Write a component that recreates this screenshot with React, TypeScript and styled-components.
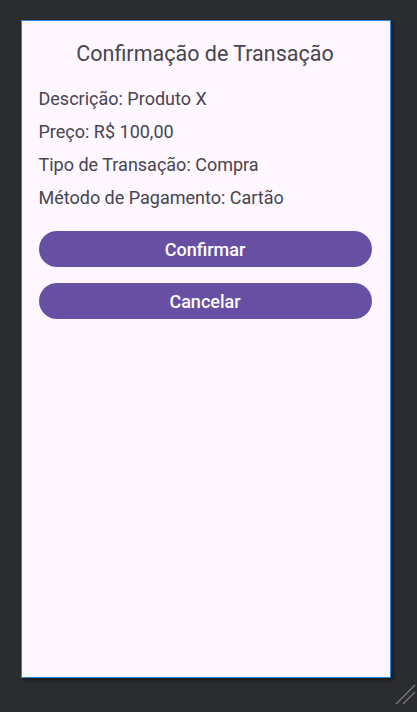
import { createGlobalStyle, styled } from 'styled-components';

const GlobalStyle = createGlobalStyle`
    html, body {
        margin: 0;
        padding: 0;
        background-color: #2b2c30;
    }
    body {
        font-family: Roboto, 'Noto Sans', sans-serif;
    }
`;

// 거래 확인 화면
const App = () => {
    const DETAIL_LIST = [
        { id: 'd_00', text: 'Descrição: Produto X' },
        { id: 'd_01', text: 'Preço: R$ 100,00' },
        { id: 'd_02', text: 'Tipo de Transação: Compra' },
        { id: 'd_03', text: 'Método de Pagamento: Cartão' },
    ];
    const BUTTON_LIST = [
        { id: 'b_00', label: 'Confirmar' },
        { id: 'b_01', label: 'Cancelar' },
    ];

    return (
        <>
            <GlobalStyle />
            <StageDiv>
                <ScreenDiv>
                    <TitleDiv>Confirmação de Transação</TitleDiv>
                    <DetailList>
                        {DETAIL_LIST.map((dData) => (
                            <DetailRow key={dData.id}>{dData.text}</DetailRow>
                        ))}
                    </DetailList>
                    <ButtonList>
                        {BUTTON_LIST.map((bData) => (
                            <ActionButton key={bData.id} type="button">
                                {bData.label}
                            </ActionButton>
                        ))}
                    </ButtonList>
                </ScreenDiv>
                {/* 리사이즈 핸들 */}
                <ResizeGrip width="22" height="22" viewBox="0 0 22 22">
                    <line x1="2" y1="21" x2="21" y2="2" stroke="#7a7b7e" strokeWidth="1.3" />
                    <line x1="9" y1="21" x2="21" y2="9" stroke="#7a7b7e" strokeWidth="1.3" />
                </ResizeGrip>
            </StageDiv>
        </>
    );
};

const StageDiv = styled.div`
    position: relative;
    width: 417px;
    height: 712px;
    padding: 20px 0 0 21px;
    box-sizing: border-box;
    overflow: hidden;
`;

const ScreenDiv = styled.div`
    display: flex;
    flex-direction: column;
    width: 370px;
    height: 658px;
    box-sizing: border-box;
    padding: 17px 18.5px 16px 16.5px;
    border: 1.5px solid #2a86e0;
    background-color: #fef7ff;
    box-shadow: 2px 2px 3px rgba(0, 0, 0, 0.45);
`;

const TitleDiv = styled.div`
    height: 32px;
    line-height: 32px;
    font-size: 21.5px;
    text-align: center;
    color: #48454e;
`;

const DetailList = styled.div`
    display: flex;
    flex-direction: column;
    gap: 8px;
    margin-top: 16px;
`;

const DetailRow = styled.div`
    height: 25px;
    line-height: 25px;
    font-size: 18px;
    color: #48454e;
`;

const ButtonList = styled.div`
    display: flex;
    flex-direction: column;
    gap: 16px;
    margin-top: 21px;
`;

const ActionButton = styled.button`
    height: 36px;
    border: none;
    border-radius: 18px;
    background-color: #6750a4;
    color: #ffffff;
    font-family: Roboto, sans-serif;
    font-size: 18px;
    font-weight: 500;
    cursor: pointer;
`;

const ResizeGrip = styled.svg`
    position: absolute;
    right: 1px;
    bottom: 7px;
`;

export default App;
